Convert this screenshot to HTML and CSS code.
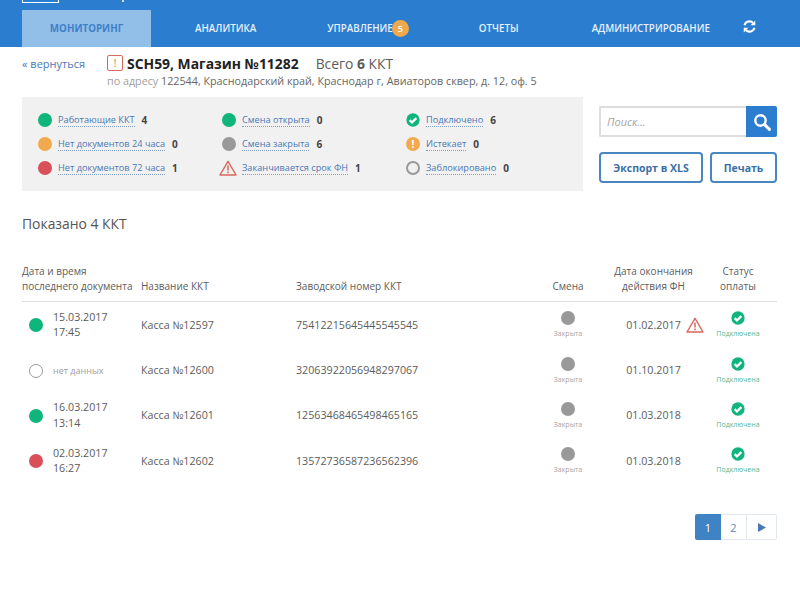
FILE: index.html
```html
<!DOCTYPE html>
<html lang="en">

<head>
  <meta charset="UTF-8">
  <title>Мониторинг ККТ</title>
  <link rel="stylesheet" href="styles.css">
</head>

<body>
  <svg class="sprite" width="0" height="0">
    <symbol id="check" viewBox="0 0 16 16">
      <circle cx="8" cy="8" r="7.6" fill="#10b57c"/>
      <path d="M4.2 8.2l2.6 2.6 5-5" fill="none" stroke="#fff" stroke-width="2.6"/>
    </symbol>
    <symbol id="warn" viewBox="0 0 18 16">
      <path d="M9 1.3L17 15H1z" fill="none" stroke="#d9685c" stroke-width="1.4" stroke-linejoin="round"/>
      <path d="M9 5.5v5M9 11.6v1.6" fill="none" stroke="#d9685c" stroke-width="1.5"/>
    </symbol>
  </svg>

  <header class="topbar">
    <div class="brand">
      <div class="logo"></div>
      <div class="logo-tail"></div>
    </div>
    <nav class="nav">
      <a href="#" class="nav-link active">МОНИТОРИНГ</a>
      <a href="#" class="nav-link nav-an">АНАЛИТИКА</a>
      <a href="#" class="nav-link nav-up">УПРАВЛЕНИЕ<span class="badge">5</span></a>
      <a href="#" class="nav-link nav-re">ОТЧЕТЫ</a>
      <a href="#" class="nav-link nav-ad">АДМИНИСТРИРОВАНИЕ</a>
      <a href="#" class="refresh" aria-label="Обновить">
        <svg width="13" height="13" viewBox="0 0 14 14">
          <path d="M1.6 5.6A5.6 5.6 0 0 1 11 3.2" fill="none" stroke="#fff" stroke-width="2.2"/>
          <path d="M13.2 .6v5h-5z" fill="#fff"/>
          <path d="M12.4 8.4A5.6 5.6 0 0 1 3 10.8" fill="none" stroke="#fff" stroke-width="2.2"/>
          <path d="M.8 13.4v-5h5z" fill="#fff"/>
        </svg>
      </a>
    </nav>
  </header>

  <div class="page">
    <div class="title-row">
      <a href="#" class="back">« вернуться</a>
      <div class="title-main">
        <h1 class="title"><span class="alert-box">!</span>SCH59, Магазин №11282<span class="total">Всего <b>6</b> ККТ</span></h1>
        <div class="address"><span class="address-label">по адресу</span> 122544, Краснодарский край, Краснодар г, Авиаторов сквер, д. 12, оф. 5</div>
      </div>
    </div>

    <div class="summary-row">
      <div class="summary">
        <ul class="legend legend-1">
          <li><i class="dot green"></i><a href="#">Работающие ККТ</a><b>4</b></li>
          <li><i class="dot orange"></i><a href="#">Нет документов 24 часа</a><b>0</b></li>
          <li><i class="dot red"></i><a href="#">Нет документов 72 часа</a><b>1</b></li>
        </ul>
        <ul class="legend legend-2">
          <li><i class="dot green"></i><a href="#">Смена открыта</a><b>0</b></li>
          <li><i class="dot grey"></i><a href="#">Смена закрыта</a><b>6</b></li>
          <li><svg class="warn-lg"><use href="#warn"/></svg><a href="#">Заканчивается срок ФН</a><b>1</b></li>
        </ul>
        <ul class="legend legend-3">
          <li><svg class="icon-14"><use href="#check"/></svg><a href="#">Подключено</a><b>6</b></li>
          <li><i class="dot orange small">!</i><a href="#">Истекает</a><b>0</b></li>
          <li><i class="dot ring thick"></i><a href="#">Заблокировано</a><b>0</b></li>
        </ul>
      </div>
      <div class="tools">
        <div class="search">
          <input type="text" placeholder="Поиск...">
          <button class="search-btn" aria-label="Поиск">
            <svg width="18" height="18" viewBox="0 0 18 18">
              <circle cx="7.5" cy="7.5" r="5.2" fill="none" stroke="#fff" stroke-width="2.4"/>
              <path d="M11.4 11.4l5 5" stroke="#fff" stroke-width="3" stroke-linecap="round"/>
            </svg>
          </button>
        </div>
        <div class="tool-btns">
          <button class="btn btn-xls">Экспорт в XLS</button>
          <button class="btn btn-print">Печать</button>
        </div>
      </div>
    </div>

    <h2 class="shown">Показано 4 ККТ</h2>

    <table class="kkt">
      <thead>
        <tr>
          <th class="c-date">Дата и время<br>последнего документа</th>
          <th class="c-name">Название ККТ</th>
          <th class="c-serial">Заводской номер ККТ</th>
          <th class="c-shift">Смена</th>
          <th class="c-end">Дата окончания<br>действия ФН</th>
          <th class="c-pay">Статус<br>оплаты</th>
        </tr>
      </thead>
      <tbody>
        <tr>
          <td class="c-date"><div class="when"><i class="dot green"></i><span>15.03.2017<br>17:45</span></div></td>
          <td class="c-name">Касса №12597</td>
          <td class="c-serial">75412215645445545545</td>
          <td class="c-shift"><i class="dot grey"></i><small>Закрыта</small></td>
          <td class="c-end">01.02.2017<svg class="warn-sm"><use href="#warn"/></svg></td>
          <td class="c-pay"><svg class="icon-14"><use href="#check"/></svg><small>Подключена</small></td>
        </tr>
        <tr>
          <td class="c-date"><div class="when"><i class="dot ring"></i><span class="nodata">нет данных</span></div></td>
          <td class="c-name">Касса №12600</td>
          <td class="c-serial">32063922056948297067</td>
          <td class="c-shift"><i class="dot grey"></i><small>Закрыта</small></td>
          <td class="c-end">01.10.2017</td>
          <td class="c-pay"><svg class="icon-14"><use href="#check"/></svg><small>Подключена</small></td>
        </tr>
        <tr>
          <td class="c-date"><div class="when"><i class="dot green"></i><span>16.03.2017<br>13:14</span></div></td>
          <td class="c-name">Касса №12601</td>
          <td class="c-serial">12563468465498465165</td>
          <td class="c-shift"><i class="dot grey"></i><small>Закрыта</small></td>
          <td class="c-end">01.03.2018</td>
          <td class="c-pay"><svg class="icon-14"><use href="#check"/></svg><small>Подключена</small></td>
        </tr>
        <tr>
          <td class="c-date"><div class="when"><i class="dot red"></i><span>02.03.2017<br>16:27</span></div></td>
          <td class="c-name">Касса №12602</td>
          <td class="c-serial">13572736587236562396</td>
          <td class="c-shift"><i class="dot grey"></i><small>Закрыта</small></td>
          <td class="c-end">01.03.2018</td>
          <td class="c-pay"><svg class="icon-14"><use href="#check"/></svg><small>Подключена</small></td>
        </tr>
      </tbody>
    </table>

    <div class="pager">
      <a href="#" class="page-link current">1</a>
      <a href="#" class="page-link">2</a>
      <a href="#" class="page-link next" aria-label="Дальше">
        <svg width="8" height="9" viewBox="0 0 8 9"><path d="M0 0l8 4.5L0 9z" fill="#4a78b5"/></svg>
      </a>
    </div>
  </div>
</body>

</html>
```

FILE: styles.css
```css
:root {
  --blue: #2b7dd0;
  --link: #4a78b5;
  --green: #10b57c;
  --text: #5c5c5c;
}

html, body {
  height: 591px;
  overflow: hidden;
}

body {
  margin: 0;
  font-family: "Open Sans", sans-serif;
  font-size: 11px;
  color: var(--text);
  background: #fff;
}

a {
  text-decoration: none;
}

.sprite {
  display: block;
  height: 0;
}

.topbar {
  height: 47px;
  background: var(--blue);
  overflow: hidden;
}

.brand {
  display: flex;
  height: 3px;
}

.logo {
  width: 35px;
  height: 2px;
  margin-left: 22px;
  border: 1px solid #fff;
  border-top: 0;
}

.logo-tail {
  width: 2px;
  height: 2px;
  margin-left: 63px;
  background: #cfe2f5;
}

.nav {
  display: flex;
  align-items: center;
  height: 37px;
  margin: 7px 0 0 22px;
  font-size: 9.8px;
  font-weight: 600;
}

.nav-link {
  position: relative;
  color: #e6f0fa;
}

.nav-link.active {
  display: flex;
  align-items: center;
  justify-content: center;
  width: 129px;
  height: 37px;
  color: #3f7fc8;
  font-weight: 700;
  background: #92bfe8;
}

.nav-an { margin-left: 44px; }
.nav-up { margin-left: 71px; }
.nav-re { margin-left: 86px; }
.nav-ad { margin-left: 73px; }

.badge {
  position: absolute;
  top: -2px;
  right: -16px;
  width: 17px;
  height: 17px;
  border-radius: 50%;
  color: #fff;
  font-size: 9px;
  line-height: 17px;
  text-align: center;
  background: #f0a94a;
}

.refresh {
  display: flex;
  margin: -4px 0 0 33px;
}

.page {
  padding: 0 23px 0 22px;
}

.title-row {
  display: flex;
  padding-top: 7px;
}

.back {
  width: 85px;
  margin-top: 2px;
  color: var(--link);
  font-size: 11px;
}

.title {
  display: flex;
  align-items: center;
  margin: 0;
  color: #222;
  font-size: 13.9px;
  font-weight: 700;
  line-height: 20px;
}

.alert-box {
  width: 14px;
  height: 14px;
  margin: -2px 4px 0 0;
  border: 1px solid #d9685c;
  border-radius: 2px;
  color: #d9685c;
  font-size: 10px;
  font-weight: 400;
  line-height: 14px;
  text-align: center;
}

.total {
  margin-left: 17px;
  color: var(--text);
  font-weight: 400;
}

.address {
  color: #666;
  font-size: 10.75px;
  line-height: 14px;
}

.address-label {
  color: #a0a0a0;
}

.summary-row {
  display: flex;
  margin-top: 9px;
}

.summary {
  display: flex;
  flex: none;
  width: 561px;
  height: 94px;
  padding-top: 11px;
  box-sizing: border-box;
  background: #f1f1f1;
}

.legend {
  margin: 0;
  padding: 0;
  list-style: none;
  font-size: 9.2px;
}

.legend li {
  display: flex;
  align-items: center;
  height: 24px;
}

.legend a {
  color: var(--link);
  border-bottom: 1px dotted #7f9fc8;
}

.legend b {
  margin-left: 7px;
  color: #444;
  font-size: 10px;
}

.legend-1 { width: 184px; padding-left: 16px; box-sizing: border-box; }
.legend-2 { width: 184px; }
.legend-3 { padding-left: 16px; }

.legend-1 .dot, .legend-2 .dot { margin-right: 6px; }
.legend-2 li { padding-left: 16px; }
.legend-2 .warn-lg { margin-left: -3px; margin-right: 5px; }

.dot {
  display: inline-block;
  flex: none;
  width: 14px;
  height: 14px;
  border-radius: 50%;
  font-style: normal;
}

.dot.green { background: var(--green); }
.dot.orange { background: #f2a94e; }
.dot.red { background: #d9505a; }
.dot.grey { background: #999; }

.dot.ring {
  box-sizing: border-box;
  border: 1.5px solid #999;
}

.dot.ring.thick {
  border-width: 2px;
}

.dot.small {
  color: #fff;
  font-size: 10px;
  font-weight: 700;
  line-height: 14px;
  text-align: center;
}

.legend-3 li > :first-child { margin-right: 6px; }

.icon-14 {
  display: block;
  flex: none;
  width: 14px;
  height: 14px;
}

.warn-lg {
  flex: none;
  width: 18px;
  height: 16px;
}

.warn-sm {
  position: absolute;
  width: 18px;
  height: 16px;
  margin: -1px 0 0 5px;
}

.tools {
  flex: none;
  width: 178px;
  margin: 9px 0 0 16px;
}

.search {
  display: flex;
  height: 31px;
}

.search input {
  flex: 1;
  min-width: 0;
  padding: 0 6px;
  border: 2px solid #ddd;
  border-right: 0;
  border-radius: 2px 0 0 2px;
  font-family: "Open Sans", sans-serif;
  font-size: 11px;
  font-style: italic;
  outline: none;
}

.search input::placeholder {
  color: #a5a5a5;
}

.search-btn {
  display: flex;
  align-items: center;
  justify-content: center;
  width: 31px;
  padding: 0;
  border: 0;
  border-radius: 0 2px 2px 0;
  background: var(--blue);
}

.tool-btns {
  display: flex;
  justify-content: space-between;
  margin-top: 15px;
}

.btn {
  height: 31px;
  padding: 0;
  border: 2px solid #4a86bf;
  border-radius: 4px;
  color: #3a6fa5;
  font-family: "Open Sans", sans-serif;
  font-size: 10.5px;
  font-weight: 700;
  background: #fff;
}

.btn-xls { width: 104px; }
.btn-print { width: 67px; }

.shown {
  margin: 23px 0 0;
  color: #555;
  font-size: 13.9px;
  font-weight: 400;
  line-height: 20px;
}

.kkt {
  width: 755px;
  margin-top: 16px;
  border-collapse: collapse;
  table-layout: fixed;
}

.kkt th {
  height: 44px;
  padding: 0 0 7px;
  border-bottom: 1px solid #ddd;
  font-size: 10px;
  font-weight: 400;
  line-height: 15px;
  text-align: left;
  vertical-align: bottom;
}

.kkt td {
  padding: 2px 0 0;
  font-size: 10.7px;
  line-height: 15.5px;
  vertical-align: middle;
}

.kkt tbody tr {
  height: 45.4px;
}

.kkt small {
  display: block;
  margin-top: 4px;
  font-size: 7px;
  line-height: 10px;
  color: #a5a5a5;
}

.c-date { width: 119px; }
.c-name { width: 155px; }
.c-serial { width: 242px; }
.c-shift { width: 60px; }
.c-end { width: 111px; }

.kkt .c-shift, .kkt .c-end, .kkt .c-pay {
  text-align: center;
}

.kkt .c-pay {
  padding-right: 10px;
}

.kkt .c-shift .dot, .kkt .c-pay .icon-14 {
  display: block;
  margin: 0 auto;
}

.kkt .c-pay small {
  color: #55b795;
}

.when {
  display: flex;
  align-items: center;
  gap: 10px;
  padding-left: 7px;
}

.nodata {
  color: #a0a0a0;
  font-size: 9px;
}

.pager {
  display: flex;
  justify-content: flex-end;
  margin-top: 31px;
}

.page-link {
  display: flex;
  align-items: center;
  justify-content: center;
  width: 26px;
  height: 26px;
  border: 1px solid #e2e8ee;
  border-left: 0;
  box-sizing: border-box;
  color: #5c86b5;
  font-size: 11px;
}

.page-link.current {
  color: #fff;
  background: #3f83c5;
  border: 0;
  border-radius: 2px 0 0 2px;
}

.page-link.next {
  width: 30px;
  border-radius: 0 2px 2px 0;
}
```
